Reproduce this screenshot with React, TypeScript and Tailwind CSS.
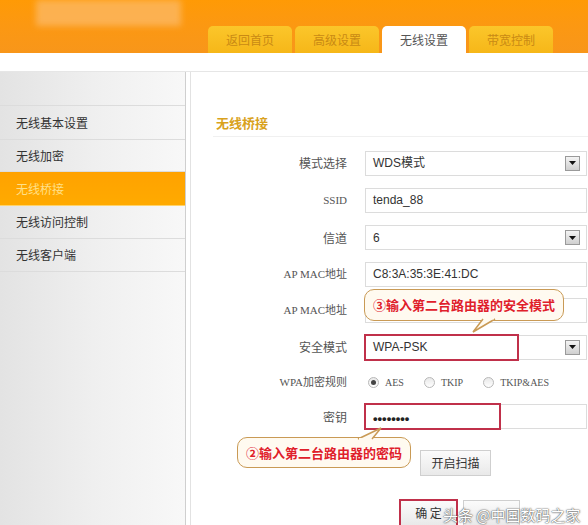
import React from "react";

const cjk = { fontFamily: '"Noto Sans CJK SC", "Liberation Sans", sans-serif' };

function DropBtn() {
  return (
    <div className="w-[15px] h-[15px] border border-[#9a9a9a] bg-gradient-to-b from-[#f4f4f4] to-[#cfcfcf] flex items-center justify-center">
      <svg width="7" height="4" viewBox="0 0 7 4">
        <path d="M0 0 L7 0 L3.5 4 Z" fill="#111" />
      </svg>
    </div>
  );
}

function Row({ label, h, serif, children }: { label: string; h: number; serif?: boolean; children: React.ReactNode }) {
  return (
    <div className="flex items-center" style={{ height: h }}>
      <div
        className={`w-[156px] text-right text-[#555] ${serif ? "text-[11px]" : "text-[12px]"}`}
        style={serif ? { fontFamily: '"Liberation Serif", "Noto Sans CJK SC", serif' } : cjk}
      >
        {label}
      </div>
      <div className="ml-[18px] w-[222px] flex items-center">{children}</div>
    </div>
  );
}

function Field({ text, drop, children }: { text?: string; drop?: boolean; children?: React.ReactNode }) {
  return (
    <div className="relative w-[222px] h-[25px] border border-[#dcdcdc] bg-white flex items-center pl-[7px] pr-[6px]">
      <span className="flex-1 text-[12px] text-[#333]" style={{ fontFamily: '"Liberation Sans", "Noto Sans CJK SC", sans-serif' }}>
        {text}
      </span>
      {drop && <DropBtn />}
      {children}
    </div>
  );
}

function Radio({ on, label }: { on?: boolean; label: string }) {
  return (
    <div className="flex items-center gap-[6px] mr-[20px]">
      <div className="w-[11px] h-[11px] rounded-full border border-[#b8b8b8] bg-gradient-to-b from-[#e8e8e8] to-[#fff] flex items-center justify-center">
        {on && <div className="w-[5px] h-[5px] rounded-full bg-[#444]" />}
      </div>
      <span className="text-[10px] text-[#555]" style={{ fontFamily: '"Liberation Serif", serif' }}>
        {label}
      </span>
    </div>
  );
}

export default function App() {
  const tabs = ["返回首页", "高级设置", "无线设置", "带宽控制"];
  return (
    <div className="relative w-[588px] h-[525px] overflow-hidden bg-white" style={cjk}>
      {/* header */}
      <div className="h-[53px] bg-gradient-to-b from-[#ff9a05] to-[#f8961a] flex flex-col">
        <div className="h-[26px] flex">
          <div className="ml-[36px] w-[145px] h-[26px] bg-[#fcbc6e] blur-[3px] opacity-70" />
        </div>
        <div className="h-[27px] flex items-end pl-[208px] gap-[3px]">
          {tabs.map((t, i) => (
            <div
              key={t}
              className={`w-[84px] h-[27px] rounded-t-[5px] flex items-center justify-center text-[12px] shrink-0 ${
                i === 2
                  ? "bg-white text-[#555]"
                  : "bg-gradient-to-b from-[#fbc62a] to-[#f6b718] text-[#c98a14]"
              }`}
            >
              {t}
            </div>
          ))}
        </div>
      </div>
      <div className="h-[19px] border-b border-[#e6e6e6]" />

      <div className="flex">
        {/* sidebar */}
        <div className="w-[186px] h-[460px] bg-gradient-to-r from-[#e3e3e3] via-[#efefef] to-[#f8f8f8] border-r border-[#cfcfcf]">
          <div className="h-[34px] border-b border-[#dcdcdc]" />
          {[
            ["无线基本设置", 34],
            ["无线加密", 32],
            ["无线桥接", 34],
            ["无线访问控制", 33],
            ["无线客户端", 33],
          ].map(([t, h], i) => (
            <div
              key={t as string}
              className={`flex items-center pl-[16px] text-[12px] border-b ${
                i === 2
                  ? "bg-gradient-to-b from-[#ffa200] to-[#ffaa00] text-[#ffe08a] border-[#ffd36a]"
                  : "text-[#333] border-[#dcdcdc]"
              }`}
              style={{ height: h as number }}
            >
              {t}
            </div>
          ))}
        </div>
        <div className="w-[4px]" />
        <div className="flex-1 border-l border-[#e2e2e2] h-[460px]">
          <div className="pt-[43px] pl-[25px]">
            <div className="text-[13px] font-bold text-[#d9a21d] leading-[16px]">无线桥接</div>
          </div>
          <div className="mt-[5px] ml-[22px] h-px bg-[#f0f0f0]" />
          <div className="pt-[8px]">
            <Row label="模式选择" h={36}>
              <Field text="WDS模式" drop />
            </Row>
            <Row label="SSID" h={38} serif>
              <Field text="tenda_88" />
            </Row>
            <Row label="信道" h={37}>
              <Field text="6" drop />
            </Row>
            <Row label="AP MAC地址" h={36} serif>
              <Field text="C8:3A:35:3E:41:DC" />
            </Row>
            <Row label="AP MAC地址" h={37} serif>
              <Field text="" />
            </Row>
            <Row label="安全模式" h={36}>
              <Field text="WPA-PSK" drop>
                <div className="absolute left-[-2px] top-[-2px] w-[155px] h-[27px] border-2 border-[#c0304a]" />
              </Field>
            </Row>
            <Row label="WPA加密规则" h={35} serif>
              <div className="flex items-center pl-[3px]">
                <Radio on label="AES" />
                <Radio label="TKIP" />
                <Radio label="TKIP&AES" />
              </div>
            </Row>
            <Row label="密钥" h={33}>
              <Field>
                <span
                  className="absolute left-[7px] top-[4px] text-[13px] font-bold text-[#222] tracking-[0px]"
                  style={{ fontFamily: '"Liberation Sans", sans-serif' }}
                >
                  ••••••••
                </span>
                <div className="absolute left-[-2px] top-[-2px] w-[137px] h-[27px] border-2 border-[#c0304a]" />
              </Field>
            </Row>
          </div>
          <div className="mt-[17px] ml-[229px] w-[71px] h-[26px] border border-[#cfcfcf] bg-gradient-to-b from-[#fbfbfb] to-[#e9e9e9] flex items-center justify-center text-[12px] text-[#333]">
            开启扫描
          </div>
          <div className="mt-[24px] ml-[209px] flex gap-[6px]">
            <div className="relative w-[57px] h-[26px] border border-[#cfcfcf] bg-gradient-to-b from-[#fbfbfb] to-[#e9e9e9] flex items-center justify-center text-[12px] text-[#333]">
              确 定
              <div className="absolute left-[-2px] top-[-2px] w-[59px] h-[28px] border-2 border-[#c0304a]" />
            </div>
            <div className="w-[57px] h-[26px] border border-[#cfcfcf] bg-gradient-to-b from-[#fbfbfb] to-[#e9e9e9]" />
          </div>
        </div>
      </div>

      {/* callout 1 */}
      <div className="absolute left-[364px] top-[289px] w-[200px] h-[32px] rounded-[10px] border-[1.5px] border-[#c99a55] bg-[#fffaf0] flex items-center justify-center text-[13px] font-bold text-[#e0202a] [text-shadow:0_0_2px_#fff]">
        ③输入第二台路由器的安全模式
      </div>
      <svg className="absolute left-[465px] top-[318px]" width="40" height="16" viewBox="0 0 40 16">
        <path d="M18 1 L8 14 L30 1" fill="#fffaf0" stroke="#c99a55" strokeWidth="1.5" />
        <path d="M19 0 L29 0" stroke="#fffaf0" strokeWidth="3" />
      </svg>

      {/* callout 2 */}
      <div className="absolute left-[237px] top-[437px] w-[174px] h-[31px] rounded-[10px] border-[1.5px] border-[#c99a55] bg-[#fffaf0] flex items-center justify-center text-[13px] font-bold text-[#e0202a] [text-shadow:0_0_2px_#fff]">
        ②输入第二台路由器的密码
      </div>
      <svg className="absolute left-[350px] top-[426px]" width="40" height="14" viewBox="0 0 40 14">
        <path d="M8 13 L31 2 L22 13" fill="#fffaf0" stroke="#c99a55" strokeWidth="1.5" />
        <path d="M9 13.5 L21 13.5" stroke="#fffaf0" strokeWidth="3" />
      </svg>

      {/* watermark */}
      <div className="absolute left-[443px] top-[504px] text-[15px] text-white [text-shadow:0_0_2px_#555,0_0_1px_#333]">
        头条 @中国数码之家
      </div>
    </div>
  );
}
